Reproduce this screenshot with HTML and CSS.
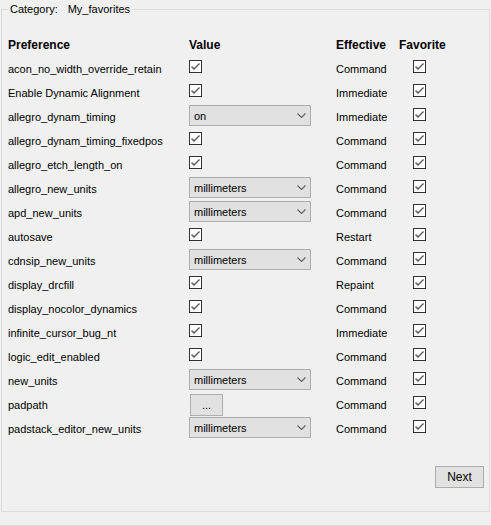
FILE: index.html
```html
<!DOCTYPE html>
<html>
<head>
<meta charset="utf-8">
<link rel="stylesheet" href="styles.css">
</head>
<body>
<div class="window">
  <fieldset class="group">
    <legend class="legend"><span class="cat-label">Category:</span><span class="cat-value">My_favorites</span></legend>
    <div class="table">
      <div class="row head">
        <div class="c-pref">Preference</div>
        <div class="c-val">Value</div>
        <div class="c-eff">Effective</div>
        <div class="c-fav">Favorite</div>
      </div>

      <div class="row">
        <div class="c-pref">acon_no_width_override_retain</div>
        <div class="c-val"><span class="cb"><svg viewBox="0 0 13 13"><polyline points="2.5,6.5 5,9 10.5,3.5"/></svg></span></div>
        <div class="c-eff">Command</div>
        <div class="c-fav"><span class="cb"><svg viewBox="0 0 13 13"><polyline points="2.5,6.5 5,9 10.5,3.5"/></svg></span></div>
      </div>

      <div class="row">
        <div class="c-pref">Enable Dynamic Alignment</div>
        <div class="c-val"><span class="cb"><svg viewBox="0 0 13 13"><polyline points="2.5,6.5 5,9 10.5,3.5"/></svg></span></div>
        <div class="c-eff">Immediate</div>
        <div class="c-fav"><span class="cb"><svg viewBox="0 0 13 13"><polyline points="2.5,6.5 5,9 10.5,3.5"/></svg></span></div>
      </div>

      <div class="row">
        <div class="c-pref">allegro_dynam_timing</div>
        <div class="c-val"><div class="dd"><span class="dd-text">on</span><svg class="chev" viewBox="0 0 9 5"><polyline points="0.5,0.5 4.5,4.5 8.5,0.5"/></svg></div></div>
        <div class="c-eff">Immediate</div>
        <div class="c-fav"><span class="cb"><svg viewBox="0 0 13 13"><polyline points="2.5,6.5 5,9 10.5,3.5"/></svg></span></div>
      </div>

      <div class="row">
        <div class="c-pref">allegro_dynam_timing_fixedpos</div>
        <div class="c-val"><span class="cb"><svg viewBox="0 0 13 13"><polyline points="2.5,6.5 5,9 10.5,3.5"/></svg></span></div>
        <div class="c-eff">Command</div>
        <div class="c-fav"><span class="cb"><svg viewBox="0 0 13 13"><polyline points="2.5,6.5 5,9 10.5,3.5"/></svg></span></div>
      </div>

      <div class="row">
        <div class="c-pref">allegro_etch_length_on</div>
        <div class="c-val"><span class="cb"><svg viewBox="0 0 13 13"><polyline points="2.5,6.5 5,9 10.5,3.5"/></svg></span></div>
        <div class="c-eff">Command</div>
        <div class="c-fav"><span class="cb"><svg viewBox="0 0 13 13"><polyline points="2.5,6.5 5,9 10.5,3.5"/></svg></span></div>
      </div>

      <div class="row">
        <div class="c-pref">allegro_new_units</div>
        <div class="c-val"><div class="dd"><span class="dd-text">millimeters</span><svg class="chev" viewBox="0 0 9 5"><polyline points="0.5,0.5 4.5,4.5 8.5,0.5"/></svg></div></div>
        <div class="c-eff">Command</div>
        <div class="c-fav"><span class="cb"><svg viewBox="0 0 13 13"><polyline points="2.5,6.5 5,9 10.5,3.5"/></svg></span></div>
      </div>

      <div class="row">
        <div class="c-pref">apd_new_units</div>
        <div class="c-val"><div class="dd"><span class="dd-text">millimeters</span><svg class="chev" viewBox="0 0 9 5"><polyline points="0.5,0.5 4.5,4.5 8.5,0.5"/></svg></div></div>
        <div class="c-eff">Command</div>
        <div class="c-fav"><span class="cb"><svg viewBox="0 0 13 13"><polyline points="2.5,6.5 5,9 10.5,3.5"/></svg></span></div>
      </div>

      <div class="row">
        <div class="c-pref">autosave</div>
        <div class="c-val"><span class="cb"><svg viewBox="0 0 13 13"><polyline points="2.5,6.5 5,9 10.5,3.5"/></svg></span></div>
        <div class="c-eff">Restart</div>
        <div class="c-fav"><span class="cb"><svg viewBox="0 0 13 13"><polyline points="2.5,6.5 5,9 10.5,3.5"/></svg></span></div>
      </div>

      <div class="row">
        <div class="c-pref">cdnsip_new_units</div>
        <div class="c-val"><div class="dd"><span class="dd-text">millimeters</span><svg class="chev" viewBox="0 0 9 5"><polyline points="0.5,0.5 4.5,4.5 8.5,0.5"/></svg></div></div>
        <div class="c-eff">Command</div>
        <div class="c-fav"><span class="cb"><svg viewBox="0 0 13 13"><polyline points="2.5,6.5 5,9 10.5,3.5"/></svg></span></div>
      </div>

      <div class="row">
        <div class="c-pref">display_drcfill</div>
        <div class="c-val"><span class="cb"><svg viewBox="0 0 13 13"><polyline points="2.5,6.5 5,9 10.5,3.5"/></svg></span></div>
        <div class="c-eff">Repaint</div>
        <div class="c-fav"><span class="cb"><svg viewBox="0 0 13 13"><polyline points="2.5,6.5 5,9 10.5,3.5"/></svg></span></div>
      </div>

      <div class="row">
        <div class="c-pref">display_nocolor_dynamics</div>
        <div class="c-val"><span class="cb"><svg viewBox="0 0 13 13"><polyline points="2.5,6.5 5,9 10.5,3.5"/></svg></span></div>
        <div class="c-eff">Command</div>
        <div class="c-fav"><span class="cb"><svg viewBox="0 0 13 13"><polyline points="2.5,6.5 5,9 10.5,3.5"/></svg></span></div>
      </div>

      <div class="row">
        <div class="c-pref">infinite_cursor_bug_nt</div>
        <div class="c-val"><span class="cb"><svg viewBox="0 0 13 13"><polyline points="2.5,6.5 5,9 10.5,3.5"/></svg></span></div>
        <div class="c-eff">Immediate</div>
        <div class="c-fav"><span class="cb"><svg viewBox="0 0 13 13"><polyline points="2.5,6.5 5,9 10.5,3.5"/></svg></span></div>
      </div>

      <div class="row">
        <div class="c-pref">logic_edit_enabled</div>
        <div class="c-val"><span class="cb"><svg viewBox="0 0 13 13"><polyline points="2.5,6.5 5,9 10.5,3.5"/></svg></span></div>
        <div class="c-eff">Command</div>
        <div class="c-fav"><span class="cb"><svg viewBox="0 0 13 13"><polyline points="2.5,6.5 5,9 10.5,3.5"/></svg></span></div>
      </div>

      <div class="row">
        <div class="c-pref">new_units</div>
        <div class="c-val"><div class="dd"><span class="dd-text">millimeters</span><svg class="chev" viewBox="0 0 9 5"><polyline points="0.5,0.5 4.5,4.5 8.5,0.5"/></svg></div></div>
        <div class="c-eff">Command</div>
        <div class="c-fav"><span class="cb"><svg viewBox="0 0 13 13"><polyline points="2.5,6.5 5,9 10.5,3.5"/></svg></span></div>
      </div>

      <div class="row">
        <div class="c-pref">padpath</div>
        <div class="c-val"><div class="btn-dots">...</div></div>
        <div class="c-eff">Command</div>
        <div class="c-fav"><span class="cb"><svg viewBox="0 0 13 13"><polyline points="2.5,6.5 5,9 10.5,3.5"/></svg></span></div>
      </div>

      <div class="row">
        <div class="c-pref">padstack_editor_new_units</div>
        <div class="c-val"><div class="dd"><span class="dd-text">millimeters</span><svg class="chev" viewBox="0 0 9 5"><polyline points="0.5,0.5 4.5,4.5 8.5,0.5"/></svg></div></div>
        <div class="c-eff">Command</div>
        <div class="c-fav"><span class="cb"><svg viewBox="0 0 13 13"><polyline points="2.5,6.5 5,9 10.5,3.5"/></svg></span></div>
      </div>
    </div>
    <div class="actions">
      <div class="btn-next">Next</div>
    </div>
  </fieldset>
  <div class="bottom-strip"></div>
</div>
</body>
</html>
```

FILE: styles.css
```css
html, body {
  margin: 0;
  padding: 0;
  background: #f0f0f0;
}
body {
  font-family: "Liberation Sans", Arial, sans-serif;
  font-size: 11px;
  color: #000;
  width: 491px;
  height: 526px;
  overflow: hidden;
}
.window {
  display: flex;
  flex-direction: column;
  height: 526px;
}
.group {
  box-sizing: border-box;
  margin: 2px 0 0 1px;
  width: 489px;
  padding: 0 0 23px 0;
  border: 1px solid #dcdcdc;
  min-width: 0;
}
.legend {
  margin-left: 6px;
  padding: 0 2px;
  line-height: 14px;
  font-size: 11px;
}
.cat-label {
  margin-right: 10px;
}
.table {
  display: flex;
  flex-direction: column;
  padding: 16px 0 0 6px;
}
.row {
  display: grid;
  grid-template-columns: 181px 147px 63px 1fr;
  height: 24px;
  line-height: 24px;
  white-space: nowrap;
}
.row > div {
  padding-top: 1px;
  height: 23px;
}
.head {
  font-weight: bold;
  font-size: 12px;
}
.cb {
  display: block;
  box-sizing: border-box;
  width: 13px;
  height: 13px;
  margin-top: 3px;
  border: 1px solid #333;
  background: #fff;
}
.cb svg {
  display: block;
  width: 13px;
  height: 13px;
  margin: -1px;
  fill: none;
  stroke: #555;
  stroke-width: 1.4;
}
.c-fav .cb {
  margin-left: 14px;
}
.dd {
  box-sizing: border-box;
  display: flex;
  align-items: center;
  justify-content: space-between;
  width: 122px;
  height: 21px;
  margin-top: 0;
  padding: 0 4px 0 4px;
  background: #e1e1e1;
  border: 1px solid #adadad;
  line-height: 19px;
}
.dd-text {
  padding-top: 2px;
}
.chev {
  width: 9px;
  height: 5px;
  fill: none;
  stroke: #606060;
  stroke-width: 1.1;
}
.btn-dots {
  box-sizing: border-box;
  width: 33px;
  height: 22px;
  margin: 1px 0 0 1px;
  background: #e1e1e1;
  border: 1px solid #adadad;
  text-align: center;
  line-height: 20px;
}
.actions {
  display: flex;
  justify-content: flex-end;
  padding: 26px 5px 0 0;
}
.btn-next {
  box-sizing: border-box;
  width: 49px;
  height: 22px;
  background: #e1e1e1;
  border: 1px solid #adadad;
  text-align: center;
  line-height: 20px;
  font-size: 12px;
}
.bottom-strip {
  flex: 1;
  border-bottom: 1px solid #dcdcdc;
}
```
